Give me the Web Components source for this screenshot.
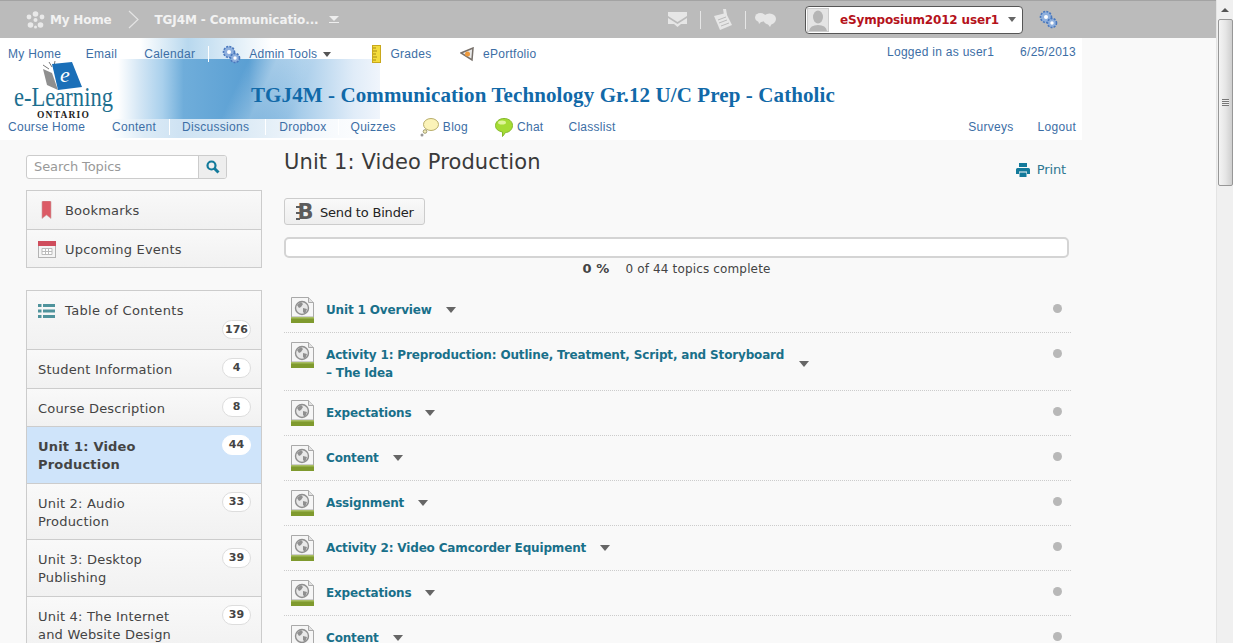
<!DOCTYPE html>
<html lang="en">
<head>
<meta charset="utf-8">
<title>Unit 1: Video Production</title>
<style>
  html, body { margin: 0; height: 100%; overflow: hidden; background: #f9f9f9; }
  body { font-family: "DejaVu Sans", sans-serif; color: #444; }
</style>
</head>
<body>
<lms-shell>
  <lms-minibar></lms-minibar>
  <lms-header></lms-header>
  <lms-page>
    <lms-sidebar slot="side"></lms-sidebar>
    <lms-content></lms-content>
  </lms-page>
</lms-shell>

<script>
/* Icons used across the page, each one drawn as inline svg */
const ICONS = {
  flower: `<svg width="19" height="18" viewBox="0 0 19 18" fill="#e9e9e9"><circle cx="9.5" cy="3" r="2.8"/><circle cx="3" cy="6" r="2.4"/><circle cx="16" cy="6" r="2.4"/><circle cx="4.5" cy="14" r="2.8"/><circle cx="14.5" cy="14" r="2.8"/><circle cx="9.5" cy="9" r="2"/><circle cx="9.5" cy="16" r="1.5"/></svg>`,
  chevron: `<svg width="11" height="19" viewBox="0 0 11 19" fill="none" stroke="#e4e4e4" stroke-width="1.2"><path d="M1 1l9 8.5L1 18"/></svg>`,
  mail: `<svg width="19" height="15" viewBox="0 0 19 15" fill="#e6e6e6"><path d="M0 0h19v4l-9.5 6L0 4z"/><path d="M0 6l9.5 6L19 6v6h-6l-3.500 3L6 12H0z"/></svg>`,
  note: `<svg width="18" height="21" viewBox="0 0 18 21"><path fill="#e6e6e6" d="M0 7l12-3 6 12-12 5z"/><path stroke="#bbb" d="M4 11l8-3M5 14l8-3M7 17l8-3"/><path fill="#e6e6e6" d="M9 0h3l1 6h-3z"/></svg>`,
  chat: `<svg width="21" height="14" viewBox="0 0 21 14" fill="#e6e6e6"><ellipse cx="5.500" cy="4.500" rx="5.500" ry="4.500"/><path d="M3 7l1 4 3-3z"/><ellipse cx="14.500" cy="6" rx="6.500" ry="5.500"/><path d="M12 10l3 4 2-4z"/></svg>`,
  gear: `<svg width="19" height="19" viewBox="0 0 19 19"><g fill="#8fb0de" stroke="#4a78bd"><circle cx="7" cy="7" r="5.500" stroke-dasharray="2 1.200" stroke-width="1.600"/><circle cx="13" cy="13" r="4.500" stroke-dasharray="2 1.200" stroke-width="1.600"/></g><circle cx="7" cy="7" r="2" fill="#fff"/><circle cx="13" cy="13" r="1.700" fill="#fff"/></svg>`,
  ruler: `<svg width="9" height="18" viewBox="0 0 9 18"><rect x=".5" y=".5" width="8" height="17" fill="#f4dc3c" stroke="#c9a81c"/><path stroke="#a88a14" d="M1 3h3M1 6h4M1 9h3M1 12h4M1 15h3"/></svg>`,
  portfolio: `<svg width="15" height="15" viewBox="0 0 15 15"><path fill="#e8e8e8" stroke="#77706a" stroke-width="1.500" d="M1 6l12-5-1 12z"/><circle cx="7.500" cy="7" r="2.500" fill="#ef9a3c"/></svg>`,
  blog: `<svg width="19" height="19" viewBox="0 0 19 19"><ellipse cx="11" cy="6.500" rx="7.500" ry="6" fill="#fbf3b8" stroke="#b8ad6a"/><circle cx="5" cy="13.500" r="1.800" fill="#f4eeb8" stroke="#a09a70"/><circle cx="2" cy="17" r="1.500" fill="#999"/></svg>`,
  bubble: `<svg width="18" height="19" viewBox="0 0 18 19"><path fill="#a5dc34" stroke="#84b82a" d="M9 .5c5 0 8.500 3 8.500 7s-3.500 7-7 7l-3 4v-4.500C3 13 .5 11 .5 7.500S4 .5 9 .5z"/><ellipse cx="7" cy="4.500" rx="4" ry="2" fill="#dff59a"/></svg>`,
  search: `<svg width="14" height="14" viewBox="0 0 14 14" fill="none" stroke="#137a9b"><circle cx="5.500" cy="5.500" r="4" stroke-width="2.200"/><path d="M8.500 8.500l4 4" stroke-width="3"/></svg>`,
  bookmark: `<svg width="11" height="18" viewBox="0 0 11 18"><path fill="#dc5b66" stroke="#c9a0a0" stroke-width=".6" d="M1 1q0-1 1-1h7q1 0 1 1v16.500L5.500 14 1 17.500z"/></svg>`,
  calendar: `<svg width="18" height="18" viewBox="0 0 18 18"><rect x=".5" y="1.500" width="17" height="16" fill="#f4f4f4" stroke="#b3b3b3"/><rect y="1" width="18" height="5" fill="#cf4d5c"/><path stroke="#bbb" fill="#fff" d="M4 8.500h10v6H4zM7.500 8.500v6M10.500 8.500v6M4 11.500h10"/></svg>`,
  list: `<svg width="17" height="14" viewBox="0 0 17 14" fill="#4f939c"><rect width="3.500" height="3"/><rect y="5.500" width="3.500" height="3"/><rect y="11" width="3.500" height="3"/><rect x="5" width="12" height="3"/><rect x="5" y="5.500" width="12" height="3"/><rect x="5" y="11" width="12" height="3"/></svg>`,
  print: `<svg width="14" height="14" viewBox="0 0 14 14" fill="#137a9b"><rect x="3" width="8" height="4"/><path d="M1.500 5h11q1.500 0 1.500 1.500V11h-3V8.500H3V11H0V6.500Q0 5 1.500 5z"/><rect x="3.500" y="9.500" width="7" height="4.500"/></svg>`,
  page: `<svg width="23" height="26" viewBox="0 0 23 26"><path fill="#f6f6f6" stroke="#a9a9a9" d="M.5.500h17l5 5V20H.5z"/><path fill="#e2e2e2" stroke="#a9a9a9" d="M17.500.500v5h5"/><circle cx="11" cy="11" r="6.500" fill="#e8e8e8" stroke="#8f8f8f" stroke-width="1.400"/><path fill="#8f8f8f" d="M6 8l4-3 2 2-2 3-2 1zM12 11l4 1-2 5-2-2z"/><rect y="20" width="23" height="6" fill="#7f9a2e"/><rect y="20" width="23" height="1.500" fill="#a8bd62"/></svg>`
};

class LmsIcon extends HTMLElement {
  connectedCallback() {
    const shadowRoot = this.attachShadow({ mode: 'open' });
    shadowRoot.innerHTML = `<style>:host { display: inline-flex; flex: none; } svg { display: block; }</style>` + ICONS[this.getAttribute('name')];
  }
}
customElements.define('lms-icon', LmsIcon);

/* Whole window: page column plus the browser scrollbar */
class LmsShell extends HTMLElement {
  connectedCallback() {
    const shadowRoot = this.attachShadow({ mode: 'open' });
    shadowRoot.innerHTML = `
      <style>
        :host { display: flex; height: 100vh; overflow: hidden; }
        .page { flex: 1; min-width: 0; overflow: hidden; }
        .bar { width: 17px; flex: none; background: #f0f0f0; border-left: 1px solid #e4e4e4; box-sizing: border-box; display: flex; flex-direction: column; align-items: center; }
        .up { height: 19px; flex: none; display: flex; align-items: center; justify-content: center; }
        .up i { border: 4px solid transparent; border-top: 0; border-bottom: 4px solid #555; }
        .thumb { width: 15px; height: 167px; box-sizing: border-box; border: 1px solid #979797; border-radius: 2px; background: linear-gradient(90deg, #f4f4f4, #e6e6e6 50%, #cfcfcf); display: flex; align-items: center; justify-content: center; }
        .thumb i { width: 7px; height: 7px; background: repeating-linear-gradient(#777 0 1px, #eee 1px 2px); }
      </style>
      <div class="page"><slot></slot></div>
      <div class="bar"><div class="up"><i></i></div><div class="thumb"><i></i></div></div>`;
  }
}
customElements.define('lms-shell', LmsShell);

/* Grey bar along the top */
class LmsMinibar extends HTMLElement {
  connectedCallback() {
    const shadowRoot = this.attachShadow({ mode: 'open' });
    shadowRoot.innerHTML = `
      <style>
        :host { display: flex; align-items: center; height: 38px; box-sizing: border-box; background: #bbb; border-top: 1px solid #a3a3a3; padding-left: 26px; color: #f2f2f2; font: 700 12px "DejaVu Sans", sans-serif; }
        .home { margin-left: 5px; letter-spacing: -.2px; }
        .chev { margin-left: 17px; }
        .course { margin-left: 15px; letter-spacing: -.1px; }
        .down { margin-left: 10px; width: 10px; border-bottom: 1px solid #eee; padding-bottom: 1px; }
        .down i { display: block; width: 0; margin: auto; border: 5px solid transparent; border-bottom: 0; border-top: 5px solid #eee; }
        .tools { margin-left: auto; display: flex; align-items: center; }
        .sep { width: 1px; height: 18px; background: #e6e6e6; }
        .user { display: flex; align-items: center; width: 218px; height: 28px; box-sizing: border-box; margin-left: 29px; background: #fff; border: 1px solid #555; border-radius: 4px; padding-left: 1px; color: #b5121b; }
        .user span { margin-left: 11px; white-space: nowrap; letter-spacing: -.15px; }
        .avatar { width: 22px; height: 24px; background: #e4e4e4; border: 1px solid #ccc; box-sizing: border-box; display: flex; justify-content: center; align-items: flex-end; overflow: hidden; }
        .avatar svg { display: block; }
        .user i { margin-left: 9px; border: 4px solid transparent; border-bottom: 0; border-top: 5px solid #666; }
        .gear { margin-left: 16px; margin-right: 158px; }
      </style>
      <lms-icon name="flower"></lms-icon>
      <span class="home">My Home</span>
      <lms-icon class="chev" name="chevron"></lms-icon>
      <span class="course">TGJ4M - Communicatio...</span>
      <div class="down"><i></i></div>
      <div class="tools">
        <lms-icon name="mail"></lms-icon>
        <div class="sep" style="margin-left:13px"></div>
        <lms-icon name="note" style="margin-left:13px"></lms-icon>
        <div class="sep" style="margin-left:13px"></div>
        <lms-icon name="chat" style="margin-left:9px"></lms-icon>
        <div class="user">
          <div class="avatar"><svg width="20" height="22" viewBox="0 0 20 22" fill="#b5b5b5"><ellipse cx="10" cy="8" rx="5" ry="6.500"/><path d="M1 22q1-6 9-6t9 6z"/></svg></div>
          <span>eSymposium2012 user1</span><i></i>
        </div>
        <lms-icon class="gear" name="gear"></lms-icon>
      </div>`;
  }
}
customElements.define('lms-minibar', LmsMinibar);

/* Course banner with the two rows of navigation links */
class LmsHeader extends HTMLElement {
  connectedCallback() {
    const shadowRoot = this.attachShadow({ mode: 'open' });
    shadowRoot.innerHTML = `
      <style>
        :host {
          display: flex; flex-direction: column; position: relative; width: 1082px; height: 102px; box-sizing: border-box;
          padding-top: 9px; color: #3c6ea5; font: 12px "Liberation Sans", Arial, sans-serif; letter-spacing: .28px;
          background:
            linear-gradient(115deg, transparent 45%, rgba(255,255,255,.28) 55%, transparent 68%) no-repeat 118px 21px / 262px 60px,
            linear-gradient(90deg, #fff 0, #dcebf6 12%, #cfe3f3 25%, #d8e8f4 45%, #f4f8fc 75%, #fff 100%) no-repeat 112px 81px / 268px 19px,
            linear-gradient(90deg, #fff 0, #d5e7f5 8%, #a9d0ec 17%, #6fadda 25%, #5a9fd3 50%, #a8cdea 70%, #e0ecf8 90%, #f0f5fc 100%) no-repeat 118px 21px / 262px 60px,
            linear-gradient(90deg, #fff 0, #b8d8ee 20%, #fff 55%) no-repeat 140px 0 / 240px 21px,
            #fff;
        }
        a { color: inherit; text-decoration: none; white-space: nowrap; }
        nav { display: flex; align-items: center; height: 14px; padding: 0 6px 0 8px; }
        nav > * { flex: none; }
        .sep { width: 1px; height: 16px; background: #fff; }
        .end { margin-left: auto; }
        .up { position: relative; top: -2px; }
        .caret { margin-left: 6px; border: 4px solid transparent; border-bottom: 0; border-top: 5px solid #555; }
        h1 { margin: 21px 0 0 251px; height: 26px; color: #1169a8; font: 700 21px/26px "Liberation Serif", Georgia, serif; white-space: nowrap; letter-spacing: .1px; }
        .low { margin-top: 12px; }
        .logo { position: absolute; left: 13px; top: 22px; letter-spacing: 0; overflow: visible; }
      </style>
      <nav>
        <a>My Home</a><a style="margin-left:24.5px">Email</a><a style="margin-left:27px">Calendar</a>
        <span class="sep" style="margin-left:13px"></span>
        <lms-icon name="gear" style="margin-left:13px"></lms-icon>
        <a style="margin-left:8px">Admin Tools</a><i class="caret"></i>
        <lms-icon name="ruler" style="margin-left:41px"></lms-icon>
        <a style="margin-left:9px">Grades</a>
        <lms-icon name="portfolio" style="margin-left:28.5px"></lms-icon>
        <a style="margin-left:8px">ePortfolio</a>
        <a class="end up">Logged in as user1</a><a class="up" style="margin-left:26px">6/25/2013</a>
      </nav>
      <h1>TGJ4M - Communication Technology Gr.12 U/C Prep - Catholic</h1>
      <nav class="low">
        <a>Course Home</a><a style="margin-left:27px">Content</a>
        <span class="sep" style="margin-left:13px"></span>
        <a style="margin-left:12px">Discussions</a>
        <span class="sep" style="margin-left:16px"></span>
        <a style="margin-left:13px">Dropbox</a>
        <span class="sep" style="margin-left:11px"></span>
        <a style="margin-left:12px">Quizzes</a>
        <lms-icon name="blog" style="margin-left:24px"></lms-icon>
        <a style="margin-left:4px">Blog</a>
        <lms-icon name="bubble" style="margin-left:27px"></lms-icon>
        <a style="margin-left:4px">Chat</a>
        <a style="margin-left:25px">Classlist</a>
        <a class="end">Surveys</a><a style="margin-left:24px">Logout</a>
      </nav>
      <svg class="logo" width="102" height="60" viewBox="0 0 102 60">
        <path fill="#8f8f8f" d="M30 9l9 4 6 17-11-5z"/>
        <path stroke="#777" d="M39 7l-3-5M36 9l-6-4M41 6l1-5"/>
        <path fill="#1a6fb8" d="M39 4l20-2 10 25-24 3z"/>
        <text x="47" y="22" font-family="Liberation Serif, serif" font-style="italic" font-size="22" fill="#fff">e</text>
        <text x="1" y="46" font-family="Liberation Serif, serif" font-size="27" fill="#1d6f8f" textLength="99" lengthAdjust="spacingAndGlyphs">e-Learning</text>
        <text x="24" y="58" font-family="Liberation Serif, serif" font-weight="700" font-size="9.500" letter-spacing="1.200" fill="#222">ONTARIO</text>
      </svg>`;
  }
}
customElements.define('lms-header', LmsHeader);

/* Two column body of the page */
class LmsPage extends HTMLElement {
  connectedCallback() {
    const shadowRoot = this.attachShadow({ mode: 'open' });
    shadowRoot.innerHTML = `
      <style>
        :host { display: grid; grid-template-columns: 236px 787px; column-gap: 22px; padding: 6px 0 0 26px; }
      </style>
      <slot name="side"></slot><slot></slot>`;
  }
}
customElements.define('lms-page', LmsPage);

/* One row of the table of contents, badge number comes from the attribute */
class LmsTocItem extends HTMLElement {
  connectedCallback() {
    const shadowRoot = this.attachShadow({ mode: 'open' });
    shadowRoot.innerHTML = `
      <style>
        :host { display: flex; justify-content: space-between; align-items: flex-start; padding: 11px 10px 8.6px 11px; border-top: 1px solid #ccc; line-height: 18px; background: linear-gradient(#f9f9f9, #f1f1f1); color: #444; }
        :host([active]) { background: #cfe4fa; font-weight: 700; }
        .txt { width: 160px; }
        b { flex: none; width: 27px; height: 18px; margin-top: -3px; border: 1px solid #ddd; border-radius: 10px; background: #fff; color: #444; font: 700 11px/18px "DejaVu Sans", sans-serif; letter-spacing: 0; text-align: center; }
        :host([active]) b { border-color: #fff; }
      </style>
      <div class="txt"><slot></slot></div><b>${this.getAttribute('count')}</b>`;
  }
}
customElements.define('lms-toc-item', LmsTocItem);

/* Left column: search box, bookmarks and table of contents */
class LmsSidebar extends HTMLElement {
  connectedCallback() {
    const shadowRoot = this.attachShadow({ mode: 'open' });
    shadowRoot.innerHTML = `
      <style>
        :host { display: block; padding-top: 9px; font-size: 13px; letter-spacing: .2px; color: #444; }
        .search { display: flex; width: 201px; height: 24px; box-sizing: border-box; border: 1px solid #ccc; border-radius: 3px; background: #fff; overflow: hidden; color: #999; line-height: 22px; letter-spacing: -.1px; }
        .search span { flex: 1; padding-left: 7px; }
        .search div { width: 27px; background: #eee; border-left: 1px solid #ccc; display: flex; align-items: center; justify-content: center; }
        .box { margin-top: 11px; border: 1px solid #ccc; }
        .link { display: flex; align-items: center; height: 38px; padding-left: 11px; background: linear-gradient(#f9f9f9, #f1f1f1); }
        .link + .link { border-top: 1px solid #ccc; height: 36px; padding-top: 1px; }
        .link .ic { width: 27px; display: flex; }
        .toc { margin-top: 22px; border-bottom: 0; }
        .head { display: block; padding: 11px 10px 9px 11px; line-height: 18px; background: linear-gradient(#f9f9f9, #f1f1f1); height: 38px; letter-spacing: .35px; }
        .head div { display: flex; align-items: center; }
        .head .ic { width: 27px; display: flex; }
        .count { width: 27px; height: 17px; margin: 0 0 0 auto; border: 1px solid #ddd; border-radius: 10px; background: #fff; font: 700 11px/17px "DejaVu Sans", sans-serif; letter-spacing: 0; justify-content: center; }
      </style>
      <div class="search"><span>Search Topics</span><div><lms-icon name="search"></lms-icon></div></div>
      <div class="box">
        <div class="link"><span class="ic"><lms-icon name="bookmark" style="margin-left:3px"></lms-icon></span>Bookmarks</div>
        <div class="link"><span class="ic"><lms-icon name="calendar"></lms-icon></span>Upcoming Events</div>
      </div>
      <div class="box toc">
        <div class="head"><div><span class="ic"><lms-icon name="list"></lms-icon></span>Table of Contents</div><div class="count">176</div></div>
        <lms-toc-item count="4">Student Information</lms-toc-item>
        <lms-toc-item count="8">Course Description</lms-toc-item>
        <lms-toc-item count="44" active>Unit 1: Video Production</lms-toc-item>
        <lms-toc-item count="33">Unit 2: Audio Production</lms-toc-item>
        <lms-toc-item count="39">Unit 3: Desktop Publishing</lms-toc-item>
        <lms-toc-item count="39">Unit 4: The Internet and Website Design</lms-toc-item>
      </div>`;
  }
}
customElements.define('lms-sidebar', LmsSidebar);

/* Topic row on the right: page icon, title, dropdown caret and status dot */
class LmsTopic extends HTMLElement {
  connectedCallback() {
    const shadowRoot = this.attachShadow({ mode: 'open' });
    shadowRoot.innerHTML = `
      <style>
        :host { display: flex; align-items: flex-start; padding: 10px 9px 9px 7px; border-bottom: 1px dotted #ccc; }
        lms-icon { margin-top: -1px; }
        .line { display: flex; align-items: center; margin: 3px 0 -1px 12px; }
        a { max-width: 459px; color: #19708a; font: 700 12px/18px "DejaVu Sans", sans-serif; letter-spacing: -.16px; }
        i { flex: none; margin-left: 14px; border: 5px solid transparent; border-bottom: 0; border-top: 6px solid #666; }
        .dot { width: 9px; height: 9px; margin: 6px 0 0 auto; border-radius: 50%; background: #b8b8b8; }
      </style>
      <lms-icon name="page"></lms-icon>
      <div class="line"><a><slot></slot></a><i></i></div>
      <div class="dot"></div>`;
  }
}
customElements.define('lms-topic', LmsTopic);

/* Right column: title, binder button, progress and the topics */
class LmsContent extends HTMLElement {
  connectedCallback() {
    const shadowRoot = this.attachShadow({ mode: 'open' });
    shadowRoot.innerHTML = `
      <style>
        :host { display: block; font-size: 13px; color: #444; }
        .top { display: flex; align-items: flex-start; justify-content: space-between; padding-right: 5px; }
        h1 { margin: 0; font: 400 21px/32px "DejaVu Sans", sans-serif; letter-spacing: .12px; color: #3a3a3a; }
        .print { display: flex; align-items: center; gap: 7px; margin-top: 16px; height: 15px; line-height: 17px; letter-spacing: -.15px; color: #2f7791; }
        button { display: flex; align-items: center; margin-top: 20px; width: 141px; height: 27px; padding: 1px 0 0 12px; border: 1px solid #ccc; border-radius: 3px; background: linear-gradient(#f9f9f9, #eee); color: #222; font: 13px "DejaVu Sans", sans-serif; letter-spacing: -.2px; }
        /* binder letter with the ring notches on its spine */
        .binder { position: relative; width: 17px; margin-right: 6px; color: #5c5c5c; font: 700 21px/25px "DejaVu Sans", sans-serif; }
        .binder::before { content: ""; position: absolute; left: -1px; top: 6px; width: 4px; height: 14px; background: repeating-linear-gradient(#5c5c5c 0 2px, transparent 2px 6px); }
        .bar { width: 785px; height: 21px; box-sizing: border-box; margin-top: 12px; border: 2px solid #d4d4d4; border-radius: 5px; background: #fff; }
        .stat { width: 785px; margin-top: 2px; height: 18px; line-height: 18px; text-align: center; font-size: 12px; letter-spacing: .15px; }
        .stat b { margin-right: 12px; font-size: 13px; }
      </style>
      <div class="top">
        <h1>Unit 1: Video Production</h1>
        <div class="print"><lms-icon name="print"></lms-icon>Print</div>
      </div>
      <button><span class="binder">B</span>Send to Binder</button>
      <div class="bar"></div>
      <div class="stat"><b>0 %</b> 0 of 44 topics complete</div>
      <div style="height:10px"></div>
      <lms-topic>Unit 1 Overview</lms-topic>
      <lms-topic>Activity 1: Preproduction: Outline, Treatment, Script, and Storyboard – The Idea</lms-topic>
      <lms-topic>Expectations</lms-topic>
      <lms-topic>Content</lms-topic>
      <lms-topic>Assignment</lms-topic>
      <lms-topic>Activity 2: Video Camcorder Equipment</lms-topic>
      <lms-topic>Expectations</lms-topic>
      <lms-topic>Content</lms-topic>`;
  }
}
customElements.define('lms-content', LmsContent);
</script>
</body>
</html>
